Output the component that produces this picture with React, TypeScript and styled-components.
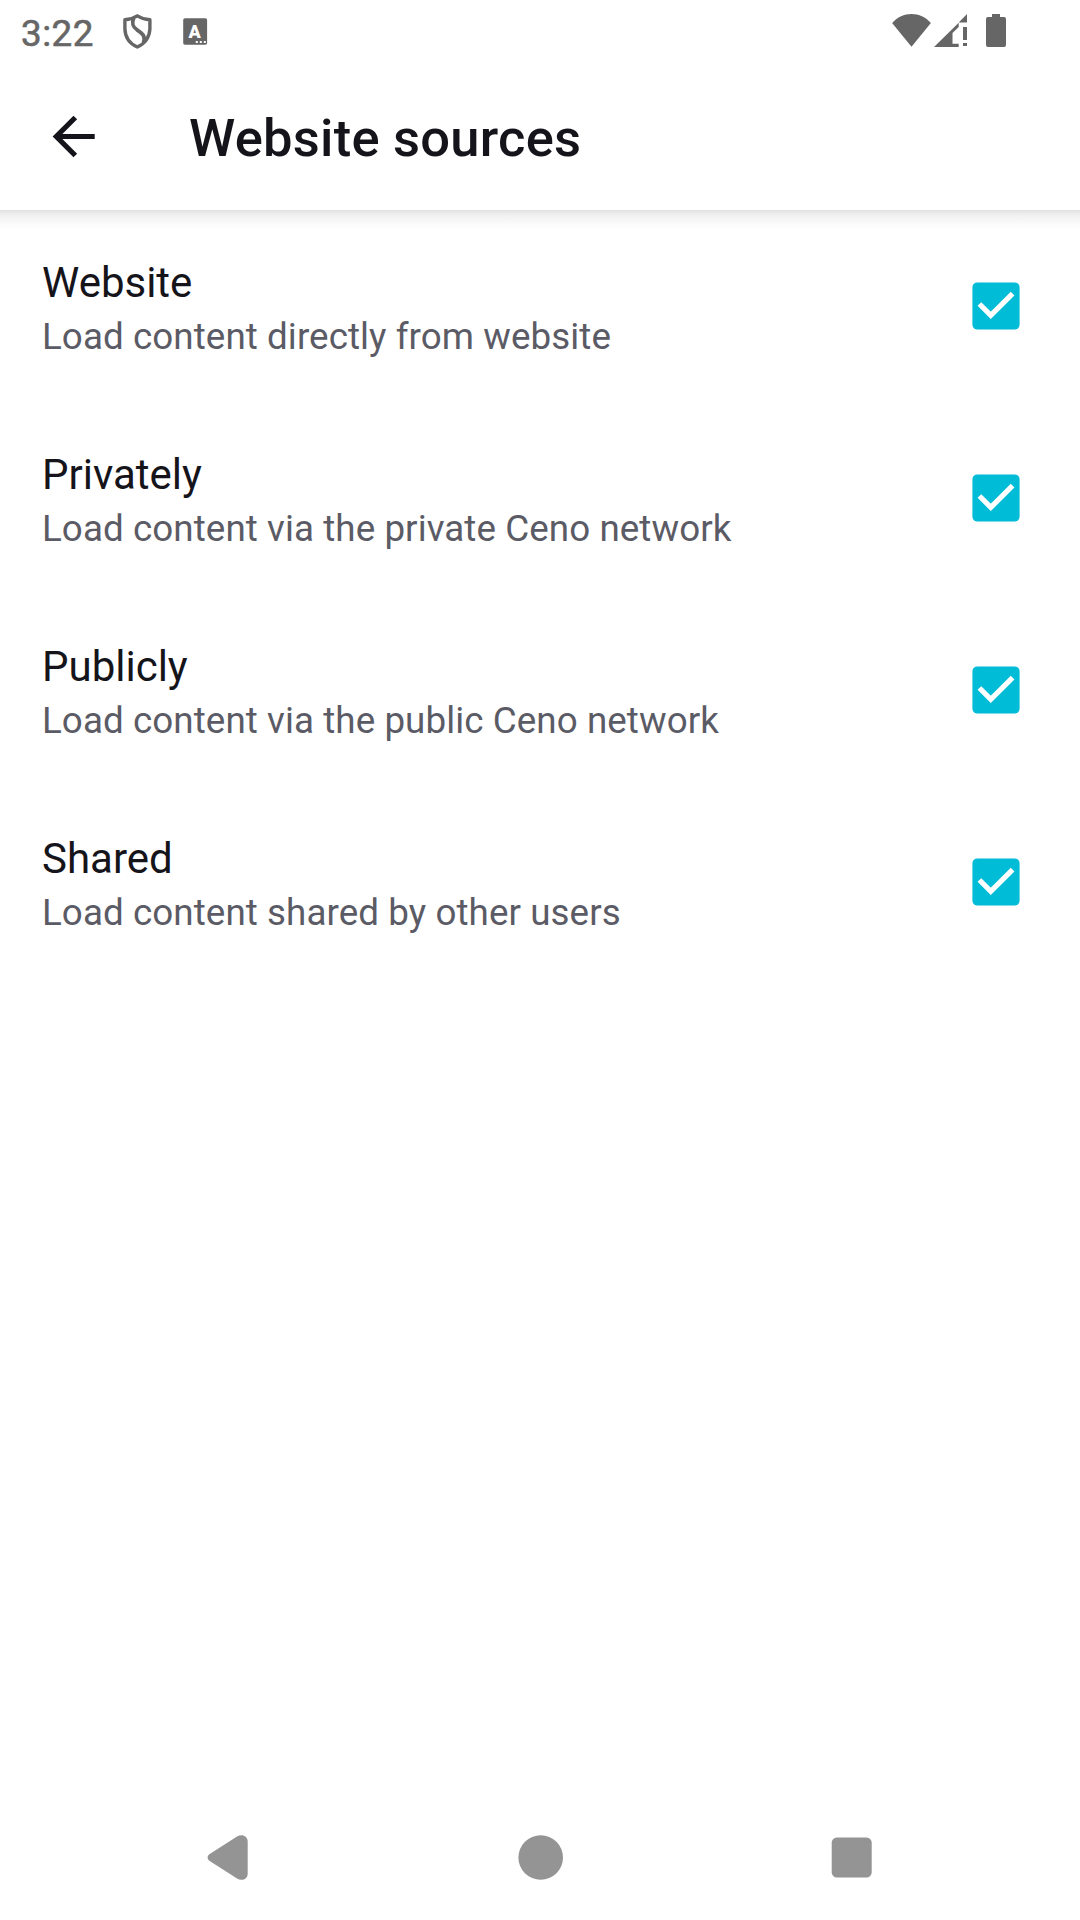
import React, { useState } from "react";
import styled, { createGlobalStyle } from "styled-components";

const GlobalStyle = createGlobalStyle`
  *, *::before, *::after { box-sizing: border-box; }
  body {
    margin: 0;
    background: #ffffff;
    font-family: Roboto, "Noto Sans", sans-serif;
  }
`;

const Screen = styled.div`
  display: flex;
  flex-direction: column;
  width: 1080px;
  height: 1920px;
  overflow: hidden;
  background: #ffffff;
  color: #15141a;
`;

const StatusBar = styled.header`
  display: flex;
  align-items: flex-start;
  justify-content: space-between;
  height: 63px;
  padding: 0 74px 0 21px;
  color: #666666;
`;

const StatusGroup = styled.div`
  display: flex;
  align-items: flex-start;
`;

const Clock = styled.time`
  width: 102px;
  padding-top: 12px;
  font-size: 36.75px;
  font-weight: 400;
  line-height: 43px;
  letter-spacing: 0.5px;
  -webkit-text-stroke: 0.6px currentColor;
`;

const Glyph = styled.svg<{ $gap?: number }>`
  display: block;
  flex: none;
  margin-left: ${({ $gap = 0 }) => $gap}px;
`;

const Toolbar = styled.div`
  display: flex;
  align-items: center;
  flex: none;
  height: 147px;
  padding-left: 42px;
  background: #ffffff;
`;

const ToolbarShadow = styled.div`
  flex: none;
  height: 20px;
  margin-bottom: -20px;
  background: linear-gradient(#e0e0e0, #e9e9e9 12%, #f3f3f3 35%, #fafafa 65%, #ffffff);
`;

const BackButton = styled.button`
  display: flex;
  width: 147px;
  padding: 0;
  border: 0;
  background: none;
  color: inherit;
`;

const Title = styled.h1`
  margin: 3.5px 0 0;
  font-size: 52.5px;
  font-weight: 500;
  line-height: 62px;
  letter-spacing: 0.24px;
  white-space: nowrap;
`;

const SourceList = styled.main`
  display: flex;
  flex: 1;
  flex-direction: column;
`;

const SourceRow = styled.div`
  display: flex;
  align-items: center;
  justify-content: space-between;
  height: 192px;
  padding: 0 60px 0 42px;
`;

const SourceText = styled.div`
  display: flex;
  flex-direction: column;
  padding-top: 4px;
`;

const SourceName = styled.span`
  font-size: 42px;
  line-height: 50px;
  white-space: nowrap;
`;

const SourceSummary = styled.span`
  margin-top: 7px;
  color: #5b5b66;
  font-size: 36.75px;
  line-height: 43px;
  letter-spacing: 0.08px;
  white-space: nowrap;
`;

const Checkbox = styled.button<{ $checked: boolean }>`
  display: flex;
  width: 48px;
  height: 48px;
  padding: 0;
  border: ${({ $checked }) => ($checked ? "0" : "5px solid #5b5b66")};
  border-radius: 5px;
  background: transparent;
`;

const NavBar = styled.nav`
  display: flex;
  align-items: center;
  justify-content: space-between;
  height: 126px;
  padding: 0 205px;
  color: #949494;
`;

const NavButton = styled.button`
  display: flex;
  padding: 0;
  border: 0;
  background: none;
  color: inherit;
`;

const ShieldIcon = () => (
  <Glyph width="30" height="63" viewBox="0 0 30 63" fill="none" stroke="currentColor" strokeWidth="3.4" strokeLinejoin="round">
    <path d="M14.3 15.8 C10.5 18.3 6.3 19.4 1.9 19.8 V29 C2.2 37.8 6.6 43.6 14.3 47 C22 43.6 26.4 37.8 26.9 29 V19.8 C22.3 19.4 18.1 18.3 14.3 15.8 Z" />
    <path d="M10.6 18 C8.2 24.5 10.2 27.2 14 29.8 C20 33.6 22.6 36.5 20.5 42.5" strokeWidth="3.8" />
  </Glyph>
);

const LetterIcon = () => (
  <Glyph $gap={30} width="25" height="63" viewBox="0 0 25 63">
    <rect x="0.2" y="18.2" width="23.9" height="26.6" rx="1.8" fill="currentColor" />
    <text x="11.7" y="37.7" textAnchor="middle" fontFamily="Roboto" fontWeight="900" fontSize="18" fill="#ffffff">
      A
    </text>
    <path d="M12.8 41h2v2h-2zM16.8 41h2v2h-2zM20.8 41h2v2h-2z" fill="#ffffff" />
  </Glyph>
);

const WifiIcon = () => (
  <Glyph width="40" height="63" viewBox="0 0 40 63" fill="currentColor">
    <path d="M0.1 23 C5.5 17 12 14 19.5 14 C27 14 33.5 17 38.9 23 L19.5 46.8 Z" />
  </Glyph>
);

const SignalIcon = () => (
  <Glyph $gap={2} width="34" height="63" viewBox="0 0 34 63" fill="currentColor">
    <path d="M0 47 L24.7 22.7 V27 L18.5 33 V43.7 H24.7 V47 Z M24.7 22.5 L33 14 V22.5 Z M29 27 H33 V40 H29 Z M29 43 H33 V46 H29 Z" />
  </Glyph>
);

const BatteryIcon = () => (
  <Glyph $gap={18} width="20" height="63" viewBox="0 0 20 63" fill="currentColor">
    <path d="M6 14 H14 V17 H18 Q20 17 20 19 V45 Q20 47 18 47 H2 Q0 47 0 45 V19 Q0 17 2 17 H6 Z" />
  </Glyph>
);

const ArrowIcon = () => (
  <Glyph width="63" height="63" viewBox="0 0 63 63" fill="none" stroke="currentColor" strokeWidth="5.2">
    <path d="M52.7 31.5 H14.6 M33.3 12.5 L14.3 31.5 L33.3 50.5" />
  </Glyph>
);

const CheckIcon = () => (
  <Glyph width="48" height="48" viewBox="0 0 48 48" fill="none">
    <rect x="0.4" y="0.4" width="47.2" height="47.2" rx="5" fill="#00bcd7" />
    <path d="M7.4 22 L18.8 33.4 L40.6 11.6" stroke="#ffffff" strokeWidth="5.2" />
  </Glyph>
);

const BackNavIcon = () => (
  <Glyph width="45" height="45" viewBox="0 0 45 45" fill="currentColor">
    <path d="M4.3 19.3 L32 1.4 C37 -1.6 42.7 1 42.7 6.5 V38.5 C42.7 44 37 46.6 32 43.6 L4.3 25.7 C2.1 24.2 2.1 20.8 4.3 19.3 Z" />
  </Glyph>
);

const HomeNavIcon = () => (
  <Glyph width="45" height="45" viewBox="0 0 45 45" fill="currentColor">
    <circle cx="22.7" cy="22.5" r="22.3" />
  </Glyph>
);

const RecentNavIcon = () => (
  <Glyph width="45" height="45" viewBox="0 0 45 45" fill="currentColor">
    <rect x="1.7" y="2.4" width="40" height="40" rx="5.2" />
  </Glyph>
);

const SOURCES = [
  { name: "Website", summary: "Load content directly from website" },
  { name: "Privately", summary: "Load content via the private Ceno network" },
  { name: "Publicly", summary: "Load content via the public Ceno network" },
  { name: "Shared", summary: "Load content shared by other users" },
];

function Source({ name, summary }: { name: string; summary: string }) {
  const [checked, setChecked] = useState(true);
  return (
    <SourceRow>
      <SourceText>
        <SourceName>{name}</SourceName>
        <SourceSummary>{summary}</SourceSummary>
      </SourceText>
      <Checkbox
        $checked={checked}
        role="checkbox"
        aria-checked={checked}
        aria-label={name}
        onClick={() => setChecked(!checked)}
      >
        {checked && <CheckIcon />}
      </Checkbox>
    </SourceRow>
  );
}

export default function App() {
  return (
    <Screen>
      <GlobalStyle />
      <StatusBar>
        <StatusGroup>
          <Clock>3:22</Clock>
          <ShieldIcon />
          <LetterIcon />
        </StatusGroup>
        <StatusGroup>
          <WifiIcon />
          <SignalIcon />
          <BatteryIcon />
        </StatusGroup>
      </StatusBar>
      <Toolbar>
        <BackButton aria-label="Back">
          <ArrowIcon />
        </BackButton>
        <Title>Website sources</Title>
      </Toolbar>
      <ToolbarShadow />
      <SourceList>
        {SOURCES.map((source) => (
          <Source key={source.name} {...source} />
        ))}
      </SourceList>
      <NavBar>
        <NavButton aria-label="Back">
          <BackNavIcon />
        </NavButton>
        <NavButton aria-label="Home">
          <HomeNavIcon />
        </NavButton>
        <NavButton aria-label="Recent apps">
          <RecentNavIcon />
        </NavButton>
      </NavBar>
    </Screen>
  );
}
